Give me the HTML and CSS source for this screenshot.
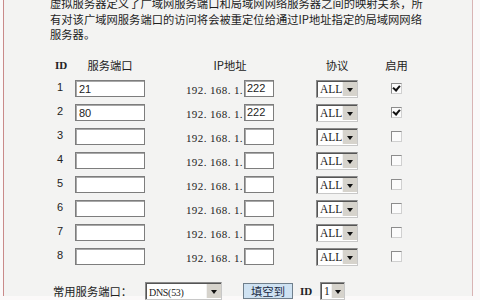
FILE: index.html
```html
<!DOCTYPE html>
<html lang="zh-CN">
<head>
  <meta charset="UTF-8" />
  <title>虚拟服务器</title>
  <link rel="stylesheet" href="styles.css">
</head>
<body>
  <div class="panel">
    <p class="intro">虚拟服务器定义了广域网服务端口和局域网网络服务器之间的映射关系，所<br>有对该广域网服务端口的访问将会被重定位给通过IP地址指定的局域网网络<br>服务器。</p>

    <!-- rule table -->
    <div class="rules">
      <div class="hd c-id">ID</div>
      <div class="hd c-port">服务端口</div>
      <div class="hd c-ip">IP地址</div>
      <div class="hd c-proto">协议</div>
      <div class="hd c-on">启用</div>

      <div class="c-id num">1</div>
      <div class="c-port"><input class="field port" value="21"></div>
      <div class="c-ip"><span class="ip">192. 168. 1.</span><input class="field host" value="222"></div>
      <div class="c-proto"><div class="pick proto"><span>ALL</span><i class="arrow"></i></div></div>
      <div class="c-on"><span class="box on"></span></div>

      <div class="c-id num">2</div>
      <div class="c-port"><input class="field port" value="80"></div>
      <div class="c-ip"><span class="ip">192. 168. 1.</span><input class="field host" value="222"></div>
      <div class="c-proto"><div class="pick proto"><span>ALL</span><i class="arrow"></i></div></div>
      <div class="c-on"><span class="box on"></span></div>

      <div class="c-id num">3</div>
      <div class="c-port"><input class="field port" value=""></div>
      <div class="c-ip"><span class="ip">192. 168. 1.</span><input class="field host" value=""></div>
      <div class="c-proto"><div class="pick proto"><span>ALL</span><i class="arrow"></i></div></div>
      <div class="c-on"><span class="box"></span></div>

      <div class="c-id num">4</div>
      <div class="c-port"><input class="field port" value=""></div>
      <div class="c-ip"><span class="ip">192. 168. 1.</span><input class="field host" value=""></div>
      <div class="c-proto"><div class="pick proto"><span>ALL</span><i class="arrow"></i></div></div>
      <div class="c-on"><span class="box"></span></div>

      <div class="c-id num">5</div>
      <div class="c-port"><input class="field port" value=""></div>
      <div class="c-ip"><span class="ip">192. 168. 1.</span><input class="field host" value=""></div>
      <div class="c-proto"><div class="pick proto"><span>ALL</span><i class="arrow"></i></div></div>
      <div class="c-on"><span class="box"></span></div>

      <div class="c-id num">6</div>
      <div class="c-port"><input class="field port" value=""></div>
      <div class="c-ip"><span class="ip">192. 168. 1.</span><input class="field host" value=""></div>
      <div class="c-proto"><div class="pick proto"><span>ALL</span><i class="arrow"></i></div></div>
      <div class="c-on"><span class="box"></span></div>

      <div class="c-id num">7</div>
      <div class="c-port"><input class="field port" value=""></div>
      <div class="c-ip"><span class="ip">192. 168. 1.</span><input class="field host" value=""></div>
      <div class="c-proto"><div class="pick proto"><span>ALL</span><i class="arrow"></i></div></div>
      <div class="c-on"><span class="box"></span></div>

      <div class="c-id num">8</div>
      <div class="c-port"><input class="field port" value=""></div>
      <div class="c-ip"><span class="ip">192. 168. 1.</span><input class="field host" value=""></div>
      <div class="c-proto"><div class="pick proto"><span>ALL</span><i class="arrow"></i></div></div>
      <div class="c-on"><span class="box"></span></div>
    </div>

    <!-- common service ports -->
    <div class="common">
      <span class="label">常用服务端口：</span>
      <div class="pick dns"><span>DNS(53)</span><i class="arrow"></i></div>
      <button class="fill">填空到</button>
      <span class="id-label">ID</span>
      <div class="pick idsel"><span>1</span><i class="arrow"></i></div>
    </div>
  </div>
</body>
</html>
```

FILE: styles.css
```css
body {
  margin: 0;
  background: #fbf9f9;
  height: 300px;
  overflow: hidden;
  font-family: "Noto Sans CJK SC", sans-serif;
  color: #222;
}

.panel {
  margin-left: 3px;
  width: 470px;
  height: 300px;
  box-sizing: border-box;
  background: #f3f3f2;
  border-left: 1px solid #c98a8a;
  border-right: 1px solid #d9b4b4;
  padding-left: 46px;
}

.intro {
  margin: -4px 0 0;
  font-size: 11.3px;
  line-height: 15.5px;
  color: #1e1e1e;
}

.rules {
  display: grid;
  grid-template-columns: 25px 70px 41px 88px 42px 42px 27px 23px;
  grid-template-rows: 16px;
  grid-auto-rows: 17px;
  row-gap: 7px;
  margin-top: 14px;
  font-size: 11px;
}

.hd {
  font-size: 11.3px;
  line-height: 16px;
  text-align: center;
}

.c-id { grid-column: 1; }
.c-port { grid-column: 2; }
.c-ip { grid-column: 4; display: flex; justify-content: flex-end; align-items: center; }
.c-proto { grid-column: 6; }
.c-on { grid-column: 8; display: flex; justify-content: center; align-items: center; }

.hd.c-id {
  text-align: left;
  padding-left: 5px;
  font-family: "Liberation Serif", serif;
  font-weight: bold;
  font-size: 11px;
}

.hd.c-ip { display: block; }
.hd.c-on { display: block; }

.num {
  font-family: "Liberation Sans", sans-serif;
  font-size: 11px;
  line-height: 15px;
  padding-left: 7px;
}

.field {
  box-sizing: border-box;
  height: 17px;
  margin: 0;
  padding: 0 3px;
  border: 1px solid #7d7d7d;
  box-shadow: inset 1px 1px 0 #a8a8a8;
  background: #fff;
  font-family: "Liberation Sans", sans-serif;
  font-size: 11px;
  color: #222;
  outline: none;
}

.port { width: 70px; }
.host { width: 30px; padding: 0 2px; }

.ip {
  font-family: "Liberation Serif", serif;
  font-size: 11px;
  letter-spacing: 0.4px;
  white-space: pre;
  margin-right: 1px;
  padding-top: 3px;
}

.pick {
  box-sizing: border-box;
  height: 18px;
  display: flex;
  align-items: stretch;
  background: #fff;
  border: 1px solid #8a8a8a;
  border-right-color: #c8c8c8;
  border-bottom-color: #c8c8c8;
  box-shadow: inset 1px 1px 0 #555;
  font-family: "Liberation Serif", serif;
  font-size: 11.5px;
}

.pick span {
  flex: 1;
  padding: 1px 0 0 3px;
  line-height: 15px;
}

.pick .arrow {
  width: 14px;
  margin: 1px 0 1px;
  background: #d6d3cc;
  border-left: 1px solid #f2f2f2;
  position: relative;
}

.pick .arrow::after {
  content: "";
  position: absolute;
  left: 4px;
  top: 6px;
  border-left: 3.5px solid transparent;
  border-right: 3.5px solid transparent;
  border-top: 4px solid #111;
}

.proto { width: 42px; }

.box {
  box-sizing: border-box;
  width: 11px;
  height: 11px;
  border: 1px solid #8c8c8c;
  border-right-color: #d0d0d0;
  border-bottom-color: #d0d0d0;
  background: #fbfbfb;
  position: relative;
}

.box.on::after {
  content: "";
  position: absolute;
  left: 2px;
  top: 0px;
  width: 3px;
  height: 5px;
  border-right: 2px solid #111;
  border-bottom: 2px solid #111;
  transform: rotate(40deg);
}

.common {
  display: flex;
  align-items: center;
  height: 18px;
  margin-top: 17px;
}

.label {
  font-size: 11.3px;
  padding-left: 3px;
  width: 92px;
}

.dns { width: 77px; font-size: 10px; }
.dns span { letter-spacing: -0.3px; padding-top: 2px; }

.fill {
  box-sizing: border-box;
  width: 50px;
  height: 16px;
  margin-left: 21px;
  padding: 0;
  background: #cfe2f2;
  border: 1px solid #6f7f8c;
  font-family: "Noto Sans CJK SC", sans-serif;
  font-size: 11.3px;
  line-height: 14px;
  color: #1a2a44;
}

.id-label {
  margin-left: 7px;
  width: 20px;
  font-family: "Liberation Serif", serif;
  font-weight: bold;
  font-size: 11px;
}

.idsel { width: 25px; margin-left: 0; }
.idsel .arrow { width: 12px; }
.idsel .arrow::after { left: 3px; }
```
